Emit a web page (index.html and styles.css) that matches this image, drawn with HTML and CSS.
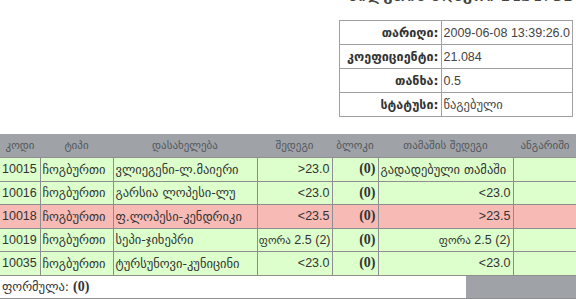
FILE: index.html
```html
<!DOCTYPE html>
<html>
<head>
<meta charset="utf-8">
<link rel="stylesheet" href="styles.css">
</head>
<body>
<div class="page">
  <h1 class="ticket-title">ბილეთის ნომერი 1434781</h1>
  <table class="info">
    <tr><th>თარიღი:</th><td>2009-06-08 13:39:26.0</td></tr>
    <tr><th>კოეფიციენტი:</th><td>21.084</td></tr>
    <tr><th>თანხა:</th><td>0.5</td></tr>
    <tr><th>სტატუსი:</th><td class="geo">წაგებული</td></tr>
  </table>
  <table class="bets">
    <colgroup>
      <col class="c-code"><col class="c-type"><col class="c-name"><col class="c-res"><col class="c-block"><col class="c-game"><col class="c-calc">
    </colgroup>
    <thead>
      <tr><th>კოდი</th><th>ტიპი</th><th>დასახელება</th><th>შედეგი</th><th>ბლოკი</th><th>თამაშის შედეგი</th><th>ანგარიში</th></tr>
    </thead>
    <tbody>
      <tr class="win"><td>10015</td><td class="geo">ჩოგბურთი</td><td class="geo">ვლიეგენი-ლ.მაიერი</td><td class="r">&gt;23.0</td><td class="r blk">(0)</td><td class="geo">გადადებული თამაში</td><td></td></tr>
      <tr class="win"><td>10016</td><td class="geo">ჩოგბურთი</td><td class="geo">გარსია ლოპესი-ლუ</td><td class="r">&lt;23.0</td><td class="r blk">(0)</td><td class="r">&lt;23.0</td><td></td></tr>
      <tr class="lose"><td>10018</td><td class="geo">ჩოგბურთი</td><td class="geo">ფ.ლოპესი-კენდრიკი</td><td class="r">&lt;23.5</td><td class="r blk">(0)</td><td class="r">&gt;23.5</td><td></td></tr>
      <tr class="win"><td>10019</td><td class="geo">ჩოგბურთი</td><td class="geo">სეპი-ჯიხეპრი</td><td class="r tight"><span class="geo-sm">ფორა</span> 2.5 (2)</td><td class="r blk">(0)</td><td class="r"><span class="geo-sm">ფორა</span> 2.5 (2)</td><td></td></tr>
      <tr class="win"><td>10035</td><td class="geo">ჩოგბურთი</td><td class="geo">ტურსუნოვი-კუნიცინი</td><td class="r">&lt;23.0</td><td class="r blk">(0)</td><td class="r">&lt;23.0</td><td></td></tr>
    </tbody>
    <tfoot>
      <tr><td colspan="7" class="foot">
        <div class="foot-row">
          <div class="formula"><span class="geo">ფორმულა:</span> <b class="blk">(0)</b></div>
          <div class="foot-gray"></div>
        </div>
      </td></tr>
    </tfoot>
  </table>
  <div class="next-strip"></div>
</div>
</body>
</html>
```

FILE: styles.css
```css
html, body {
  margin: 0;
  padding: 0;
  background: #fff;
}
body {
  font-family: "Liberation Sans", "DejaVu Sans", sans-serif;
  font-size: 12.5px;
  color: #333;
  overflow: hidden;
}
.page {
  width: 576px;
}
.geo {
  font-family: "DejaVu Sans", sans-serif;
  font-size: 12.5px;
}
.geo-sm {
  font-family: "DejaVu Sans", sans-serif;
  font-size: 11px;
}
.ticket-title {
  margin: -12px 3px 0 0;
  text-align: right;
  font-family: "DejaVu Serif", serif;
  font-size: 15px;
  font-weight: bold;
  color: #444;
  height: 16px;
  line-height: 16px;
}
.info {
  margin: 16px 3px 0 auto;
  border-collapse: collapse;
  width: 234px;
}
.info th, .info td {
  border: 1px solid #a0a0a0;
  height: 23px;
  padding: 0 2px;
  white-space: nowrap;
}
.info th {
  width: 100px;
  text-align: right;
  font-family: "DejaVu Sans", sans-serif;
  font-size: 12.5px;
  font-weight: bold;
  color: #333;
}
.info td {
  text-align: left;
  color: #444;
}
.bets {
  margin-top: 17px;
  border-collapse: collapse;
  width: 577px;
  table-layout: fixed;
}
.c-code { width: 40px; }
.c-type { width: 73px; }
.c-name { width: 144px; }
.c-res { width: 75px; }
.c-block { width: 46px; }
.c-game { width: 135px; }
.c-calc { width: 64px; }
.bets thead th {
  background: #9fa3a8;
  color: #53575b;
  font-family: "DejaVu Sans", sans-serif;
  font-size: 11px;
  font-weight: normal;
  height: 23px;
  padding: 0;
  text-align: center;
  white-space: nowrap;
  overflow: hidden;
}
.bets td {
  border: 1px solid #8e8e8e;
  height: 22.5px;
  padding: 0 2px;
  white-space: nowrap;
  overflow: hidden;
  color: #333;
}
.bets td.tight {
  padding: 0 1px;
}
.bets tbody td:first-child {
  border-left: none;
}
.win td { background: #dcffcc; }
.lose td { background: #f7bab5; }
.r { text-align: right; }
.blk {
  font-family: "Liberation Serif", serif;
  font-weight: bold;
  font-size: 14px;
  color: #333;
}
.bets td.foot {
  padding: 0;
  height: 22px;
  border-left: none;
  background: #fff;
}
.foot-row {
  display: flex;
  height: 22px;
}
.formula {
  flex: 1;
  padding: 0 2px;
  display: flex;
  align-items: center;
  gap: 4px;
}
.foot-gray {
  width: 111px;
  background: #9fa3a8;
}
.next-strip {
  height: 3px;
  width: 370px;
  margin-left: 3px;
  background: #888c90;
}
```
